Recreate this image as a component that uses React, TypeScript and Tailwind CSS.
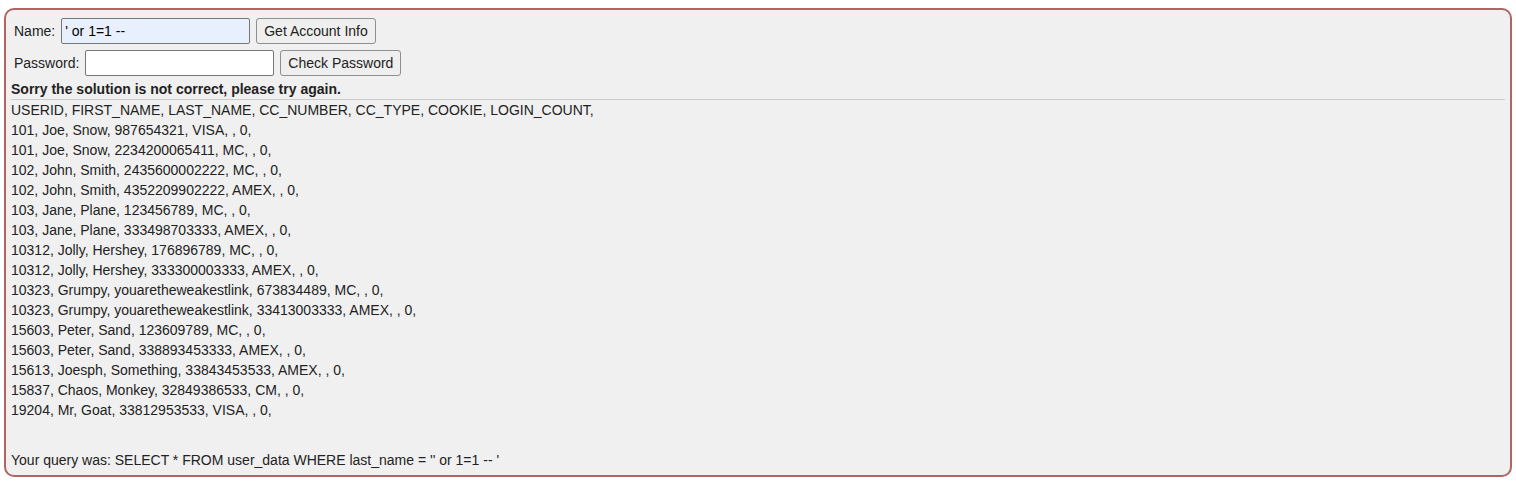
import React from 'react';

const rows = [
  '101, Joe, Snow, 987654321, VISA, , 0,',
  '101, Joe, Snow, 2234200065411, MC, , 0,',
  '102, John, Smith, 2435600002222, MC, , 0,',
  '102, John, Smith, 4352209902222, AMEX, , 0,',
  '103, Jane, Plane, 123456789, MC, , 0,',
  '103, Jane, Plane, 333498703333, AMEX, , 0,',
  '10312, Jolly, Hershey, 176896789, MC, , 0,',
  '10312, Jolly, Hershey, 333300003333, AMEX, , 0,',
  '10323, Grumpy, youaretheweakestlink, 673834489, MC, , 0,',
  '10323, Grumpy, youaretheweakestlink, 33413003333, AMEX, , 0,',
  '15603, Peter, Sand, 123609789, MC, , 0,',
  '15603, Peter, Sand, 338893453333, AMEX, , 0,',
  '15613, Joesph, Something, 33843453533, AMEX, , 0,',
  '15837, Chaos, Monkey, 32849386533, CM, , 0,',
  '19204, Mr, Goat, 33812953533, VISA, , 0,',
];

const inputCls =
  'h-[26px] w-[189px] border border-[#767676] rounded-[2px] px-[3px] text-[14px] text-black outline-none';
const buttonCls =
  'h-[26px] px-[7px] border border-[#8f8f8f] rounded-[3px] bg-[#efefef] text-[14px] text-[#222] leading-none';

export default function App() {
  return (
    <div className="bg-white min-h-[481px] pt-[8px] px-[4px] font-['Liberation_Sans',Arial,sans-serif] text-[14px] leading-[20px] text-[#222]">
      <div className="w-[1508px] h-[469px] border-2 border-[#b06464] rounded-[10px] bg-[#f0f0f0] pt-[8px] px-[5px]">
        <div className="flex flex-col gap-[6px] pl-[3px]">
          <div className="flex items-center">
            <span>Name:</span>
            <input
              className={`${inputCls} ml-[6px] bg-[#e8f0fe]`}
              defaultValue="' or 1=1 --"
            />
            <button className={`${buttonCls} ml-[6px]`}>Get Account Info</button>
          </div>
          <div className="flex items-center">
            <span>Password:</span>
            <input className={`${inputCls} ml-[6px] bg-white`} type="password" />
            <button className={`${buttonCls} ml-[6px]`}>Check Password</button>
          </div>
        </div>
        <div className="mt-[3px] font-bold">Sorry the solution is not correct, please try again.</div>
        <div className="border-t border-[#cccccc]">
          <div>USERID, FIRST_NAME, LAST_NAME, CC_NUMBER, CC_TYPE, COOKIE, LOGIN_COUNT,</div>
          {rows.map((r) => (
            <div key={r}>{r}</div>
          ))}
        </div>
        <div className="mt-[30px]">Your query was: SELECT * FROM user_data WHERE last_name = '' or 1=1 -- '</div>
      </div>
    </div>
  );
}
